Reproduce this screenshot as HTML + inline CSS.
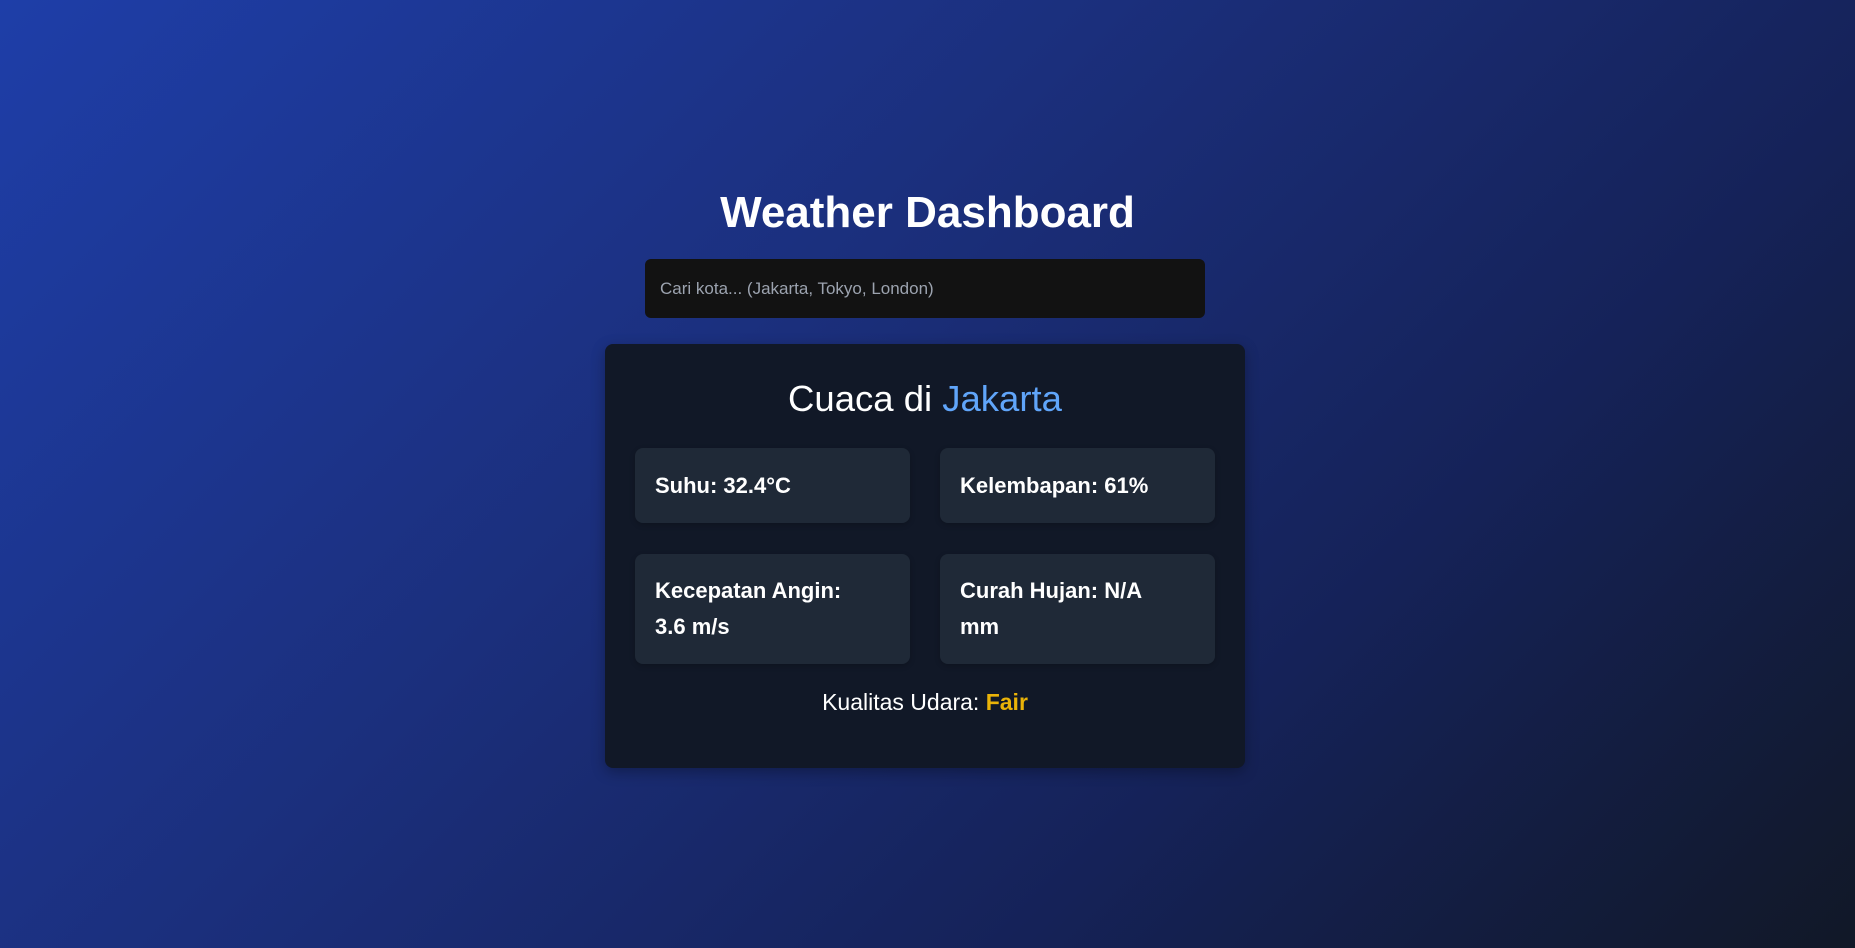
<!DOCTYPE html>
<html><head><meta charset="utf-8"><style>
*{margin:0;padding:0;box-sizing:border-box}
html,body{width:1855px;height:948px;overflow:hidden}
body{background:linear-gradient(135deg,#1e3ea8 0%,#1b2f7c 40%,#152258 70%,#111827 100%);font-family:"Liberation Sans",sans-serif;color:#f3f4f6;position:relative}
h1{position:absolute;left:0;width:1855px;top:186px;text-align:center;font-size:44px;font-weight:bold;color:#fff;line-height:54px}
.input{position:absolute;left:645px;top:259px;width:560px;height:59px;background:#121212;border-radius:6px;color:#9ca3af;font-size:17px;line-height:59px;padding-left:15px}
.card{position:absolute;left:605px;top:344px;width:640px;height:424px;background:#111827;border-radius:8px;box-shadow:0 4px 14px rgba(0,0,0,.3)}
.title{position:absolute;left:0;width:640px;top:35px;text-align:center;font-size:36.5px;font-weight:normal;line-height:40px;color:#fff}
.title span{color:#60a5fa}
.tile{position:absolute;width:275px;background:#1f2937;border-radius:8px;font-size:22px;font-weight:bold;line-height:36px;padding-left:20px;color:#fff;display:flex;align-items:center;box-shadow:0 2px 6px rgba(0,0,0,.2)}
.aq{position:absolute;left:0;width:640px;top:343px;text-align:center;font-size:23px;line-height:30px;color:#fff}
.aq span{color:#eab308;font-weight:bold}
</style></head><body>
<h1>Weather Dashboard</h1>
<div class="input">Cari kota... (Jakarta, Tokyo, London)</div>
<div class="card">
<div class="title">Cuaca di <span>Jakarta</span></div>
<div class="tile" style="left:30px;top:104px;height:75px">Suhu: 32.4°C</div>
<div class="tile" style="left:335px;top:104px;height:75px">Kelembapan: 61%</div>
<div class="tile" style="left:30px;top:210px;height:110px">Kecepatan Angin:<br>3.6 m/s</div>
<div class="tile" style="left:335px;top:210px;height:110px">Curah Hujan: N/A<br>mm</div>
<div class="aq">Kualitas Udara: <span>Fair</span></div>
</div>
</body></html>
